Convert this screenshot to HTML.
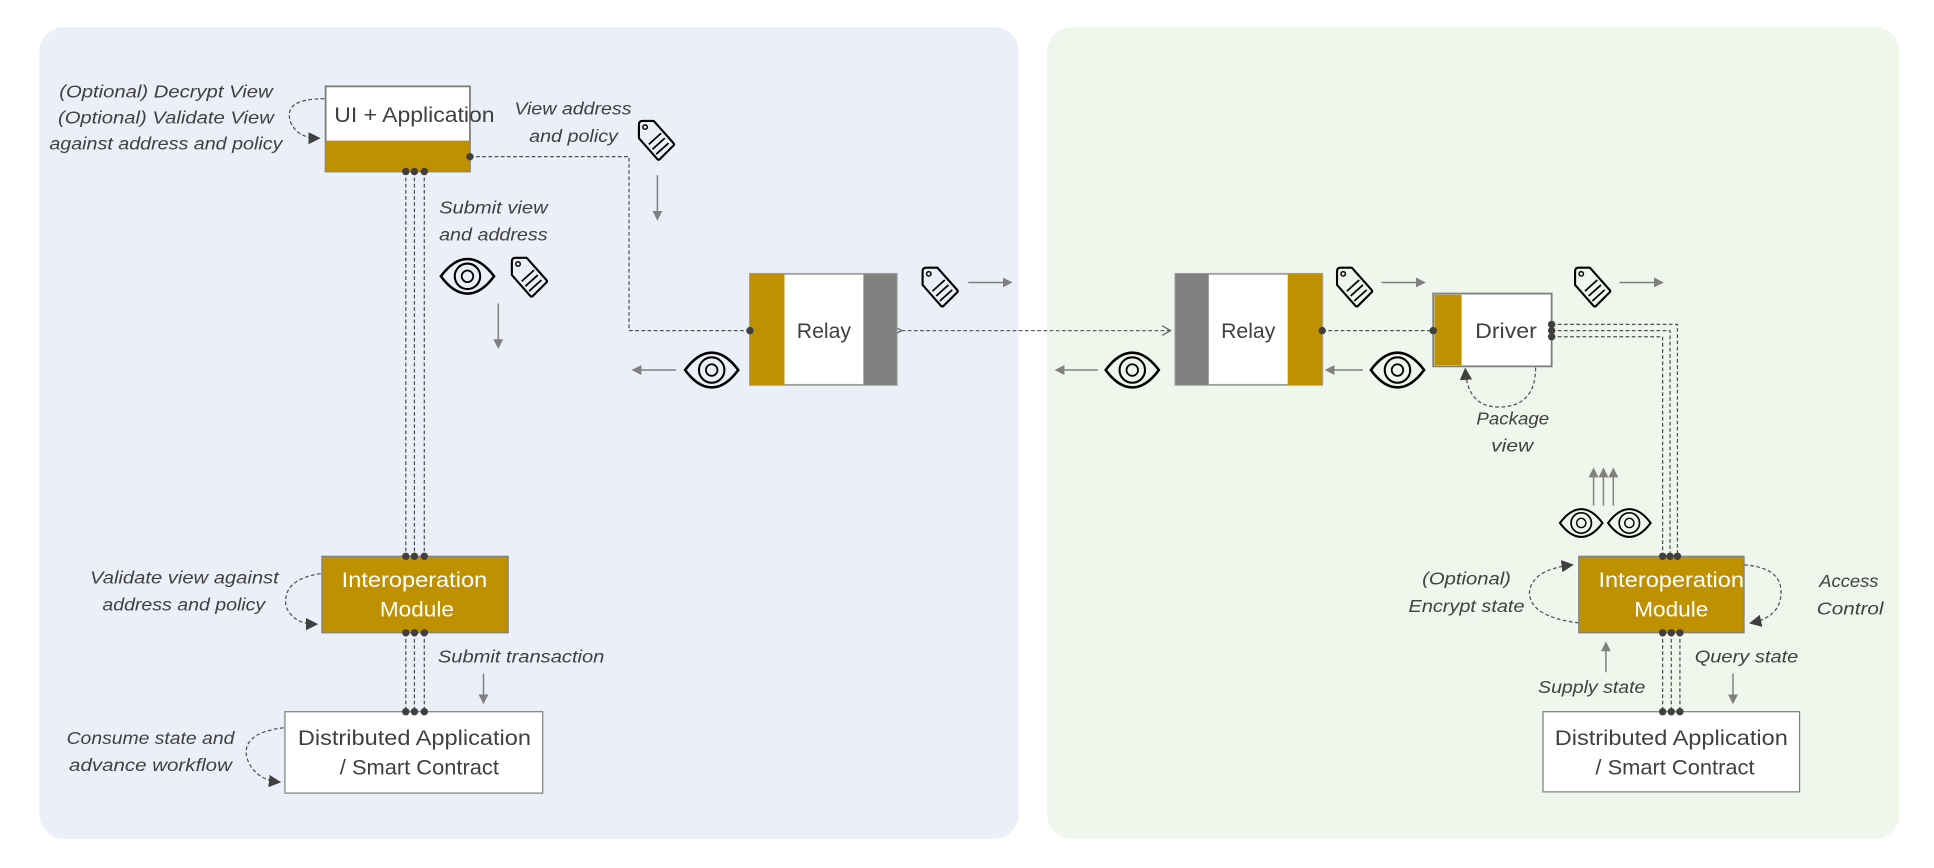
<!DOCTYPE html>
<html><head><meta charset="utf-8"><style>
html,body{margin:0;padding:0;background:#fff;}
svg{display:block;}
text{font-family:"Liberation Sans",sans-serif;fill:#404040;}
.it{font-style:italic;font-size:14px;}
.bx{font-size:17px;}
</style></head><body>
<svg width="1934" height="868" viewBox="0 0 1568 703.7" xmlns="http://www.w3.org/2000/svg">
<defs>
<marker id="ah" markerWidth="8" markerHeight="8" refX="6" refY="4" orient="auto" markerUnits="userSpaceOnUse"><path d="M0,0 L8,4 L0,8 Z" fill="#808080"/></marker>
<marker id="ad" markerWidth="10" markerHeight="10" refX="8" refY="5" orient="auto" markerUnits="userSpaceOnUse"><path d="M0,0 L10,5 L0,10 Z" fill="#404040"/></marker>
<marker id="ao" markerWidth="8" markerHeight="8" refX="7" refY="4" orient="auto" markerUnits="userSpaceOnUse"><path d="M0,0 L7,4 L0,8" fill="none" stroke="#606060" stroke-width="1"/></marker>
<symbol id="eye" viewBox="-24 -16 48 32" overflow="visible">
<path d="M-23,0 Q-12,-15 0,-15 Q12,-15 23,0 Q12,15 0,15 Q-12,15 -23,0 Z" fill="none" stroke="#000" stroke-width="2.2"/>
<circle r="11" fill="none" stroke="#000" stroke-width="1.8"/>
<circle r="5" fill="none" stroke="#000" stroke-width="1.5"/>
</symbol>
<symbol id="tag" viewBox="-18 -18 36 36" overflow="visible">
<path d="M-14,-13 Q-14,-16 -11,-16 L-2,-16 L14,2 Q15,3 14,4 L3,15 Q2,16 1,15 L-14,-2 Z" fill="none" stroke="#000" stroke-width="1.7" stroke-linejoin="round"/>
<circle cx="-9" cy="-11" r="1.8" fill="none" stroke="#000" stroke-width="1.2"/>
<path d="M-4,0 L6,-9 M-1,4 L9,-5 M2,8 L12,-1" stroke="#000" stroke-width="1.4" transform="translate(-2,3)"/>
</symbol>
</defs>
<rect x="32" y="22" width="794" height="658" rx="20" fill="#ebeff8"/>
<rect x="849" y="22" width="691" height="658" rx="20" fill="#eff6ec"/>

<g stroke="#505050" stroke-width="1" stroke-dasharray="3,2" fill="none">
<path d="M329,139 V451 M336,139 V451 M344,139 V451"/>
<path d="M329,513 V577 M336,513 V577 M344,513 V577"/>
<path d="M381,127 H510 V268 H608"/>
<path d="M1072,268 H1162"/>
<path d="M1258,263 H1360 V451 M1258,268 H1354 V451 M1258,273 H1348 V451"/>
<path d="M1348,513 V577 M1355,513 V577 M1362,513 V577"/>
<path d="M731,268 H949" marker-start="url(#ao)" marker-end="url(#ao)" stroke="#606060"/>
<path d="M263,80 Q228,80 236,100 Q242,112 258,112" marker-end="url(#ad)"/>
<path d="M260,465 Q228,470 232,492 Q238,506 256,506" marker-end="url(#ad)"/>
<path d="M230,590 Q196,594 200,614 Q206,632 226,634" marker-end="url(#ad)"/>
<path d="M1245,298 Q1245,330 1215,330 Q1190,330 1188,300" marker-end="url(#ad)"/>
<path d="M1280,505 Q1240,500 1240,480 Q1242,462 1274,458" marker-end="url(#ad)"/>
<path d="M1414,458 Q1444,460 1444,480 Q1444,500 1420,505" marker-end="url(#ad)"/>
</g>

<g stroke="#808080" stroke-width="1.2" fill="none" marker-end="url(#ah)">
<path d="M533,142 V177"/>
<path d="M404,246 V281"/>
<path d="M548,300 H514"/>
<path d="M785,229 H819"/>
<path d="M1120,229 H1154"/>
<path d="M890,300 H857"/>
<path d="M1105,300 H1076"/>
<path d="M1313,229 H1347"/>
<path d="M1292,410 V381"/><path d="M1300,410 V381"/><path d="M1308,410 V381"/>
<path d="M1302,545 V522"/>
<path d="M1405,546 V569"/>
<path d="M392,546 V569"/>
</g>

<rect x="264" y="70" width="117" height="69" fill="#fff" stroke="#808080" stroke-width="1.5"/>
<rect x="264" y="114" width="117" height="25" fill="#bf9000"/>
<text x="336" y="99" class="bx" text-anchor="middle" textLength="130" lengthAdjust="spacingAndGlyphs">UI + Application</text>

<rect x="608" y="222" width="119" height="90" fill="#fff" stroke="#a0a0a0" stroke-width="1.5"/>
<rect x="608" y="222" width="28" height="90" fill="#bf9000"/>
<rect x="700" y="222" width="27" height="90" fill="#808080"/>
<text x="668" y="274" class="bx" text-anchor="middle" textLength="44" lengthAdjust="spacingAndGlyphs">Relay</text>

<rect x="953" y="222" width="119" height="90" fill="#fff" stroke="#a0a0a0" stroke-width="1.5"/>
<rect x="953" y="222" width="27" height="90" fill="#808080"/>
<rect x="1044" y="222" width="28" height="90" fill="#bf9000"/>
<text x="1012" y="274" class="bx" text-anchor="middle" textLength="44" lengthAdjust="spacingAndGlyphs">Relay</text>

<rect x="1162" y="238" width="96" height="59" fill="#fff" stroke="#808080" stroke-width="1.5"/>
<rect x="1163" y="239" width="22" height="57" fill="#bf9000"/>
<text x="1221" y="274" class="bx" text-anchor="middle" textLength="50" lengthAdjust="spacingAndGlyphs">Driver</text>

<rect x="261" y="451" width="151" height="62" fill="#bf9000" stroke="#808080"/>
<text x="336" y="476" class="bx" text-anchor="middle" style="fill:#fff" textLength="118" lengthAdjust="spacingAndGlyphs">Interoperation</text>
<text x="338" y="500" class="bx" text-anchor="middle" style="fill:#fff" textLength="60" lengthAdjust="spacingAndGlyphs">Module</text>

<rect x="1280" y="451" width="134" height="62" fill="#bf9000" stroke="#808080"/>
<text x="1355" y="476" class="bx" text-anchor="middle" style="fill:#fff" textLength="118" lengthAdjust="spacingAndGlyphs">Interoperation</text>
<text x="1355" y="500" class="bx" text-anchor="middle" style="fill:#fff" textLength="60" lengthAdjust="spacingAndGlyphs">Module</text>

<rect x="231" y="577" width="209" height="66" fill="#fff" stroke="#808080"/>
<text x="336" y="604" class="bx" text-anchor="middle" textLength="189" lengthAdjust="spacingAndGlyphs">Distributed Application</text>
<text x="340" y="628" class="bx" text-anchor="middle" textLength="129" lengthAdjust="spacingAndGlyphs">/ Smart Contract</text>
<rect x="1251" y="577" width="208" height="65" fill="#fff" stroke="#808080"/>
<text x="1355" y="604" class="bx" text-anchor="middle" textLength="189" lengthAdjust="spacingAndGlyphs">Distributed Application</text>
<text x="1358" y="628" class="bx" text-anchor="middle" textLength="129" lengthAdjust="spacingAndGlyphs">/ Smart Contract</text>

<g fill="#404040">
<circle cx="329" cy="139" r="3"/><circle cx="336" cy="139" r="3"/><circle cx="344" cy="139" r="3"/>
<circle cx="329" cy="451" r="3"/><circle cx="336" cy="451" r="3"/><circle cx="344" cy="451" r="3"/>
<circle cx="329" cy="513" r="3"/><circle cx="336" cy="513" r="3"/><circle cx="344" cy="513" r="3"/>
<circle cx="329" cy="577" r="3"/><circle cx="336" cy="577" r="3"/><circle cx="344" cy="577" r="3"/>
<circle cx="381" cy="127" r="3"/><circle cx="608" cy="268" r="3"/>
<circle cx="1072" cy="268" r="3"/><circle cx="1162" cy="268" r="3"/>
<circle cx="1258" cy="263" r="3"/><circle cx="1258" cy="268" r="3"/><circle cx="1258" cy="273" r="3"/>
<circle cx="1348" cy="451" r="3"/><circle cx="1354" cy="451" r="3"/><circle cx="1360" cy="451" r="3"/>
<circle cx="1348" cy="513" r="3"/><circle cx="1355" cy="513" r="3"/><circle cx="1362" cy="513" r="3"/>
<circle cx="1348" cy="577" r="3"/><circle cx="1355" cy="577" r="3"/><circle cx="1362" cy="577" r="3"/>
</g>

<use href="#eye" x="356" y="209" width="46" height="30"/>
<use href="#eye" x="554" y="285" width="46" height="30"/>
<use href="#eye" x="895" y="285" width="46" height="30"/>
<use href="#eye" x="1110" y="285" width="46" height="30"/>
<use href="#eye" x="1264" y="412" width="36" height="24"/>
<use href="#eye" x="1303" y="412" width="36" height="24"/>
<use href="#tag" x="514" y="96" width="36" height="36"/>
<use href="#tag" x="411" y="207" width="36" height="36"/>
<use href="#tag" x="744" y="215" width="36" height="36"/>
<use href="#tag" x="1080" y="215" width="36" height="36"/>
<use href="#tag" x="1273" y="215" width="36" height="36"/>

<text x="48" y="79" class="it" textLength="173" lengthAdjust="spacingAndGlyphs">(Optional) Decrypt View</text>
<text x="47" y="100" class="it" textLength="175" lengthAdjust="spacingAndGlyphs">(Optional) Validate View</text>
<text x="40" y="121" class="it" textLength="189" lengthAdjust="spacingAndGlyphs">against address and policy</text>
<text x="417" y="93" class="it" textLength="95" lengthAdjust="spacingAndGlyphs">View address</text>
<text x="429" y="115" class="it" textLength="72" lengthAdjust="spacingAndGlyphs">and policy</text>
<text x="356" y="173" class="it" textLength="88" lengthAdjust="spacingAndGlyphs">Submit view</text>
<text x="356" y="195" class="it" textLength="88" lengthAdjust="spacingAndGlyphs">and address</text>
<text x="73" y="473" class="it" textLength="153" lengthAdjust="spacingAndGlyphs">Validate view against</text>
<text x="83" y="495" class="it" textLength="132" lengthAdjust="spacingAndGlyphs">address and policy</text>
<text x="355" y="537" class="it" textLength="135" lengthAdjust="spacingAndGlyphs">Submit transaction</text>
<text x="54" y="603" class="it" textLength="136" lengthAdjust="spacingAndGlyphs">Consume state and</text>
<text x="56" y="625" class="it" textLength="132" lengthAdjust="spacingAndGlyphs">advance workflow</text>
<text x="1197" y="344" class="it" textLength="59" lengthAdjust="spacingAndGlyphs">Package</text>
<text x="1209" y="366" class="it" textLength="34" lengthAdjust="spacingAndGlyphs">view</text>
<text x="1153" y="474" class="it" textLength="72" lengthAdjust="spacingAndGlyphs">(Optional)</text>
<text x="1142" y="496" class="it" textLength="94" lengthAdjust="spacingAndGlyphs">Encrypt state</text>
<text x="1475" y="476" class="it" textLength="48" lengthAdjust="spacingAndGlyphs">Access</text>
<text x="1473" y="498" class="it" textLength="54" lengthAdjust="spacingAndGlyphs">Control</text>
<text x="1247" y="562" class="it" textLength="87" lengthAdjust="spacingAndGlyphs">Supply state</text>
<text x="1374" y="537" class="it" textLength="84" lengthAdjust="spacingAndGlyphs">Query state</text>
</svg>
</body></html>
